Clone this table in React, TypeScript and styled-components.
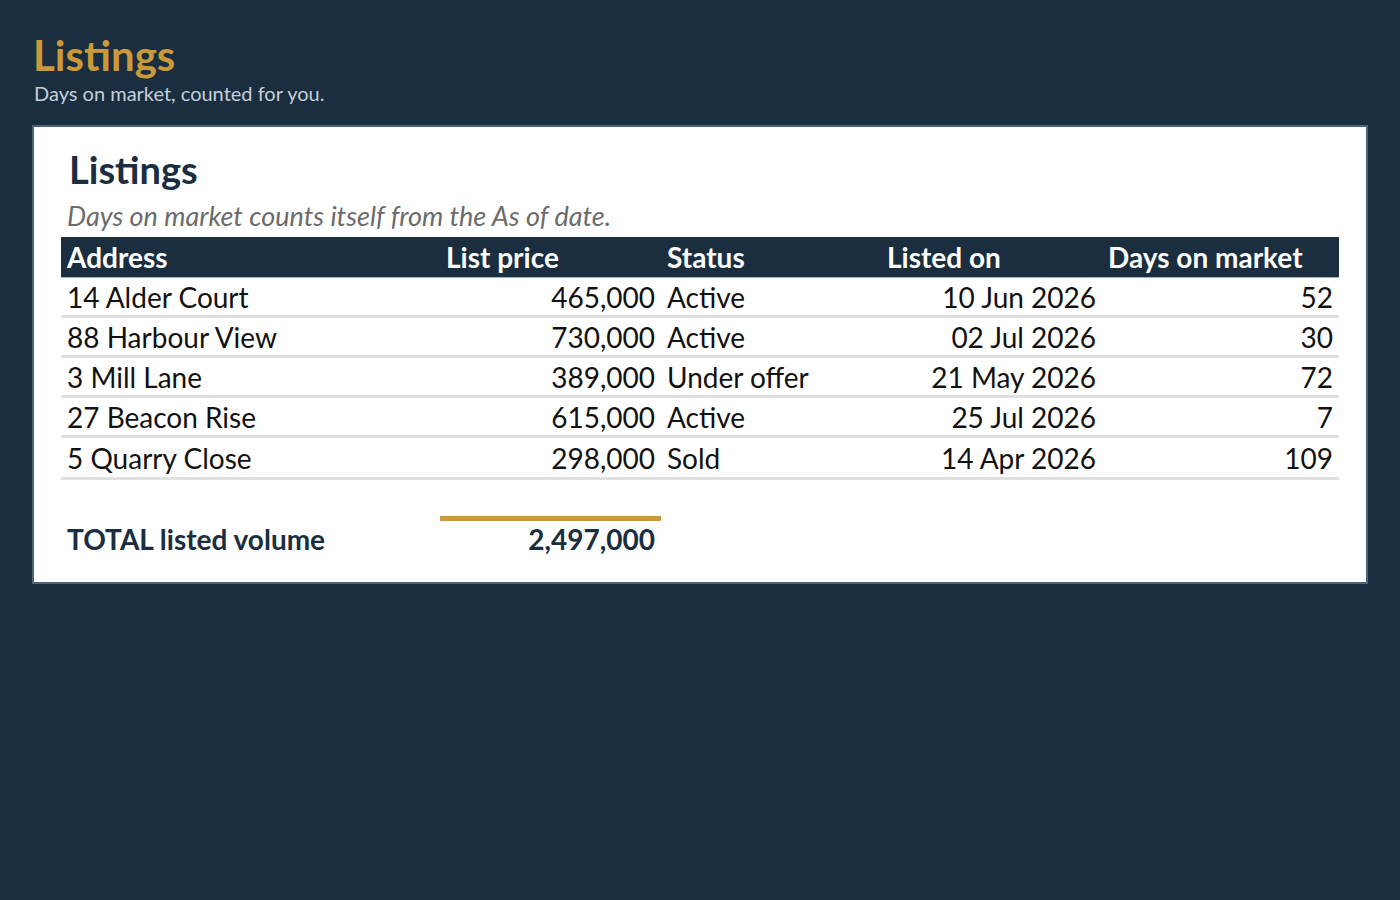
import React from 'react';
import styled, { createGlobalStyle } from 'styled-components';

type Listing = {
    address: string,
    price: number,
    status: string,
    listedOn: string,
    days: number,
}

const listings: Listing[] = [
    {address: '14 Alder Court', price: 465000, status: 'Active', listedOn: '10 Jun 2026', days: 52},
    {address: '88 Harbour View', price: 730000, status: 'Active', listedOn: '02 Jul 2026', days: 30},
    {address: '3 Mill Lane', price: 389000, status: 'Under offer', listedOn: '21 May 2026', days: 72},
    {address: '27 Beacon Rise', price: 615000, status: 'Active', listedOn: '25 Jul 2026', days: 7},
    {address: '5 Quarry Close', price: 298000, status: 'Sold', listedOn: '14 Apr 2026', days: 109},
];

const fmt = (n: number) => n.toLocaleString('en-GB');

export default function App() {
    const total = listings.reduce((sum, l) => sum + l.price, 0);
    return (
        <>
            <GlobalStyle />
            <Page>
                <PageTitle>Listings</PageTitle>
                <PageSubtitle>Days on market, counted for you.</PageSubtitle>
                <Card>
                    <CardTitle>Listings</CardTitle>
                    <Note>Days on market counts itself from the As of date.</Note>
                    <Table>
                        <colgroup>
                            <col style={{width: 379}} />
                            <col style={{width: 221}} />
                            <col style={{width: 220}} />
                            <col style={{width: 221}} />
                            <col style={{width: 237}} />
                        </colgroup>
                        <thead>
                            <tr>
                                <Th>Address</Th>
                                <Th>List price</Th>
                                <Th>Status</Th>
                                <Th>Listed on</Th>
                                <Th>Days on market</Th>
                            </tr>
                        </thead>
                        <tbody>
                            {listings.map(l => (
                                <Row key={l.address}>
                                    <Td>{l.address}</Td>
                                    <Td $right>{fmt(l.price)}</Td>
                                    <Td>{l.status}</Td>
                                    <Td $right>{l.listedOn}</Td>
                                    <Td $right>{l.days}</Td>
                                </Row>
                            ))}
                        </tbody>
                        <tfoot>
                            <tr>
                                <TotalLabel>TOTAL listed volume</TotalLabel>
                                <TotalValue>{fmt(total)}</TotalValue>
                                <td colSpan={3} />
                            </tr>
                        </tfoot>
                    </Table>
                </Card>
            </Page>
        </>
    )
}

const GlobalStyle = createGlobalStyle`
    html, body {
        margin: 0;
        background: #1a2e40;
    }
    body {
        font-family: Lato, "Open Sans", sans-serif;
    }
`;

const Page = styled.main`
    padding: 30px 32px;
    min-height: 100vh;
    box-sizing: border-box;
`;

const PageTitle = styled.h1`
    margin: 0;
    color: #c9993a;
    font-size: 42px;
    font-weight: 700;
    line-height: 50px;
    padding-left: 1px;
`;

const PageSubtitle = styled.p`
    margin: 0 0 19px;
    color: #c5ced8;
    font-size: 20px;
    line-height: 26px;
    padding-left: 2px;
`;

const Card = styled.section`
    background: #ffffff;
    border: 2px solid #4d6379;
    padding: 19px 27px 20px;
`;

const CardTitle = styled.h2`
    margin: 0 0 0 8px;
    color: #1a2e40;
    font-size: 38px;
    font-weight: 700;
    line-height: 46px;
`;

const Note = styled.p`
    margin: 7px 0 0 6px;
    color: #6b6b6b;
    font-size: 27px;
    font-style: italic;
    line-height: 34px;
`;

const Table = styled.table`
    width: 100%;
    border-collapse: collapse;
    table-layout: fixed;
    margin-top: 4px;
    font-size: 28px;
    color: #111111;
`;

const Th = styled.th`
    background: #1a2e40;
    color: #ffffff;
    font-weight: 700;
    text-align: left;
    height: 40px;
    padding: 0 6px;
    border-bottom: 1px solid #9fb0c0;
    white-space: nowrap;
`;

const Row = styled.tr`
    border-bottom: 3px solid #e0e0e0;
    &:last-child td {
        height: 39px;
    }
`;

const Td = styled.td<{$right?: boolean}>`
    height: 37px;
    padding: 0 6px;
    text-align: ${p => p.$right ? 'right' : 'left'};
    white-space: nowrap;
`;

const TotalLabel = styled.td`
    padding: 36px 6px 0;
    font-weight: 700;
    color: #1a2e40;
    height: 46px;
    white-space: nowrap;
`;

const TotalValue = styled.td`
    position: relative;
    padding: 36px 6px 0;
    text-align: right;
    font-weight: 700;
    color: #1a2e40;
    &::before {
        content: '';
        position: absolute;
        left: 0;
        right: 0;
        top: 36px;
        height: 5px;
        background: #c9993a;
    }
`;
